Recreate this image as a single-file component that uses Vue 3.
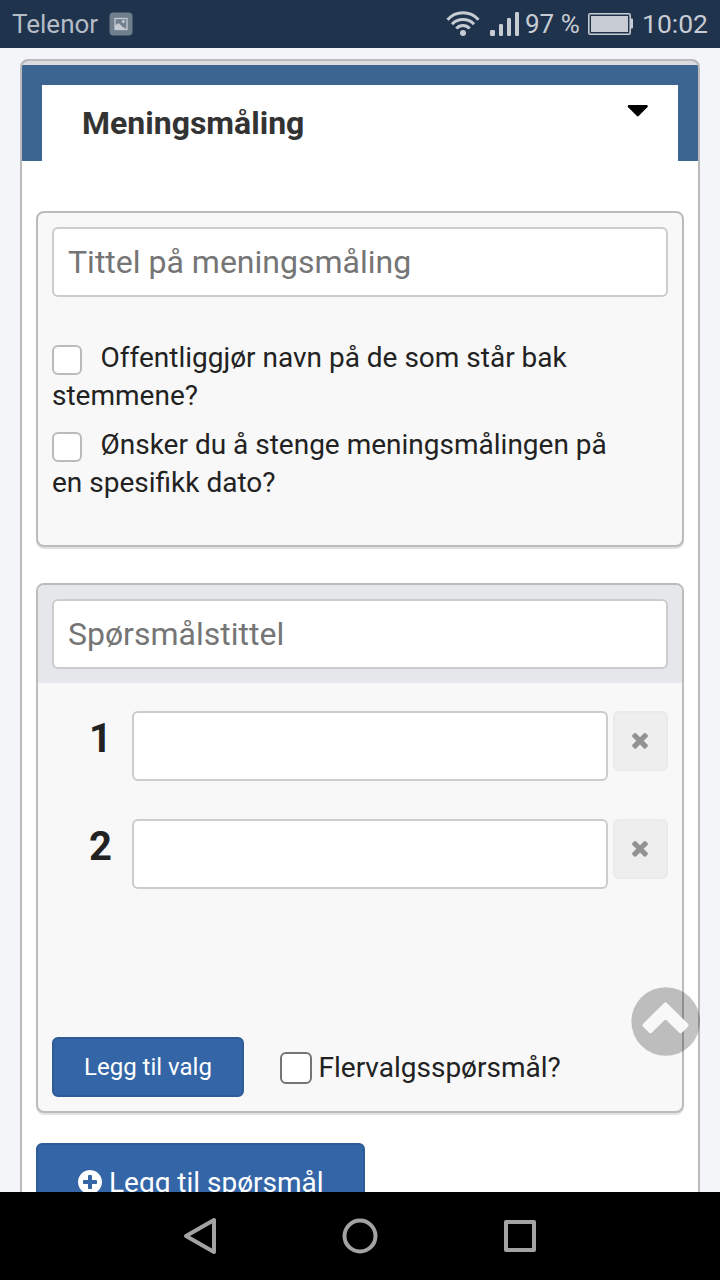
<template>
  <div class="screen">
    <header class="statusbar">
      <span class="carrier">Telenor</span>
      <svg class="shot" width="24" height="24" viewBox="0 0 24 24">
        <rect x="0.5" y="0.5" width="23" height="23" rx="4" fill="#6f7f8d" />
        <rect x="6" y="6.5" width="12" height="11" fill="none" stroke="#c5cbd2" stroke-width="1.3" />
        <path d="M6 17.500V13.500l2-1.500 2-.8 4 4 4 2.300z" fill="#c5cbd2" />
        <path d="M14.300 7.800v3.400M12.600 9.500h3.400" stroke="#c5cbd2" stroke-width="1.300" />
      </svg>
      <div class="spacer" />
      <svg class="wifi" width="34" height="26" viewBox="0 0 34 26" fill="none" stroke="#c7ccd4">
        <path d="M1.500 8.700C10-.5 24-.5 32.500 8.700" stroke-width="3" />
        <path d="M6 13.200C12 7 22 7 28 13.200" stroke-width="3" />
        <path d="M10.300 17.600C14 13.600 20 13.600 23.700 17.600" stroke-width="3" />
        <circle cx="17" cy="22" r="3" fill="#c7ccd4" stroke="none" />
      </svg>
      <svg class="signal" width="30" height="24" viewBox="0 0 30 24" fill="#c7ccd4">
        <rect x="0" y="18" width="5" height="6" rx="1.200" />
        <rect x="9" y="12" width="4" height="12" rx="1.200" />
        <rect x="17" y="6" width="4" height="18" rx="1.200" />
        <rect x="25" y="0" width="4" height="24" rx="1.200" />
      </svg>
      <span class="percent">97 %</span>
      <svg class="battery" width="46" height="22" viewBox="0 0 46 22">
        <rect x="0.800" y="0.800" width="41.400" height="20.400" rx="1.500" fill="none" stroke="#c7ccd4" stroke-width="1.600" />
        <rect x="3" y="3" width="37" height="16" fill="#c7ccd4" />
        <path d="M43 5.500h1a1 1 0 0 1 1 1v8a1 1 0 0 1-1 1h-1z" fill="#c7ccd4" />
      </svg>
      <span class="clock">10:02</span>
    </header>

    <main class="page">
      <section class="card">
        <div class="card-head">
          <button class="tab" type="button">
            <span>Meningsmåling</span>
            <svg class="caret" width="22" height="12" viewBox="0 0 22 12">
              <path d="M1.600 0h18.400q1.600.8.600 2L11.600 11q-.8.800-1.600 0L.800 2Q0 .8 1.600 0z" />
            </svg>
          </button>
        </div>

        <div class="card-body">
          <div class="panel settings">
            <input v-model="title" class="field" type="text" placeholder="Tittel på meningsmåling" />
            <label v-for="opt in options" :key="opt.text" class="option">
              <input v-model="opt.checked" class="check" type="checkbox" />{{ opt.text }}
            </label>
          </div>

          <div class="panel question">
            <div class="question-head">
              <input v-model="question" class="field" type="text" placeholder="Spørsmålstittel" />
            </div>
            <div class="choices">
              <div v-for="(choice, i) in choices" :key="i" class="choice">
                <span class="number">{{ i + 1 }}</span>
                <input v-model="choice.value" class="field" type="text" />
                <button class="remove" type="button" aria-label="Fjern">
                  <svg width="24" height="24" viewBox="0 0 1792 1792" fill="#929292">
                    <path d="M1490 1322q0 40-28 68l-136 136q-28 28-68 28t-68-28l-294-294-294 294q-28 28-68 28t-68-28l-136-136q-28-28-28-68t28-68l294-294-294-294q-28-28-28-68t28-68l136-136q28-28 68-28t68 28l294 294 294-294q28-28 68-28t68 28l136 136q28 28 28 68t-28 68l-294 294 294 294q28 28 28 68z" />
                  </svg>
                </button>
              </div>
            </div>
            <div class="question-foot">
              <button class="btn" type="button">Legg til valg</button>
              <label class="multi">
                <input v-model="multiple" class="check check--dark" type="checkbox" />
                <span>Flervalgsspørsmål?</span>
              </label>
            </div>
          </div>

          <button class="btn btn--large" type="button">
            <svg width="28" height="28" viewBox="0 0 1792 1792" fill="#fff">
              <path d="M1344 960v-128q0-26-19-45t-45-19h-256v-256q0-26-19-45t-45-19h-128q-26 0-45 19t-19 45v256h-256q-26 0-45 19t-19 45v128q0 26 19 45t45 19h256v256q0 26 19 45t45 19h128q26 0 45-19t19-45v-256h256q26 0 45-19t19-45zm320-64q0 209-103 385.500t-279.500 279.500-385.500 103-385.500-103-279.500-279.500-103-385.500 103-385.500 279.500-279.500 385.500-103 385.500 103 279.500 279.500 103 385.500z" />
            </svg>
            <span>Legg til spørsmål</span>
          </button>
        </div>
      </section>

      <button class="to-top" type="button" aria-label="Til toppen">
        <svg width="69" height="69" viewBox="0 0 69 69">
          <circle cx="34.700" cy="34.500" r="34.300" fill="#000" fill-opacity="0.235" />
          <path
            d="M34.500 17.400L55.500 38.200L49.400 44.200L34.500 29.300L19.600 44.200L13.500 38.200Z"
            fill="#f8f8f8"
            stroke="#f8f8f8"
            stroke-width="4"
            stroke-linejoin="round"
          />
        </svg>
      </button>
    </main>

    <nav class="navbar">
      <svg width="34" height="40" viewBox="0 0 34 40">
        <path d="M31 4v32L3 20z" />
      </svg>
      <svg width="36" height="36" viewBox="0 0 36 36">
        <circle cx="18" cy="18" r="15.500" />
      </svg>
      <svg width="32" height="32" viewBox="0 0 32 32">
        <rect x="2" y="2" width="28" height="28" />
      </svg>
    </nav>
  </div>
</template>

<script setup>
import { reactive, ref } from 'vue'

const title = ref('')
const question = ref('')
const multiple = ref(false)

const options = reactive([
  { text: 'Offentliggjør navn på de som står bak stemmene?', checked: false },
  { text: 'Ønsker du å stenge meningsmålingen på en spesifikk dato?', checked: false }
])

const choices = reactive([{ value: '' }, { value: '' }])
</script>

<style>
body {
  margin: 0;
}
</style>

<style scoped>
* {
  box-sizing: border-box;
}

.screen {
  display: flex;
  flex-direction: column;
  width: 720px;
  height: 1280px;
  overflow: hidden;
  background: #f4f5f8;
  color: #222;
  font-family: Roboto, 'Liberation Sans', sans-serif;
}

button,
input {
  margin: 0;
  font-family: inherit;
}

/* status bar */
.statusbar {
  display: flex;
  flex: none;
  align-items: center;
  height: 48px;
  padding: 0 12px;
  background: #20334d;
  color: #c7ccd4;
  font-size: 26.5px;
  line-height: 50px;
  white-space: nowrap;
}

.carrier {
  width: 97px;
  color: #b4bcc6;
  font-size: 26px;
  line-height: 48px;
}

.spacer {
  flex: 1;
}

.wifi {
  margin-right: 10px;
}

.signal {
  margin-right: 5px;
}

.percent {
  width: 63px;
  font-size: 26px;
}

.clock {
  width: 66px;
  margin-left: 8px;
}

/* page */
.page {
  position: relative;
  flex: 1;
  min-height: 0;
  padding: 11px 20px 0;
  overflow: hidden;
}

.card {
  height: 1300px;
  overflow: hidden;
  border: 2px solid #bbb;
  border-radius: 8px;
  background: #fff;
}

.card-head {
  height: 100px;
  padding: 20px 20px 0;
  border-top: 4px solid #ddd;
  background: #3d6592;
}

.tab {
  display: flex;
  justify-content: space-between;
  width: 100%;
  height: 76px;
  padding: 20px 29px 0 40px;
  border: 0;
  background: #fff;
  color: #333;
  font-size: 32px;
  font-weight: 700;
  line-height: 37px;
}

.caret {
  fill: #000;
}

.card-body {
  padding: 50px 14px 0;
}

.panel {
  border: 2px solid #bbb;
  border-radius: 8px;
  background: #f8f8f8;
  box-shadow: 0 2px 0 #e2e2e2;
}

.field {
  display: block;
  width: 100%;
  height: 70px;
  padding: 0 14px;
  border: 2px solid #ccc;
  border-radius: 6px;
  outline: 0;
  background: #fff;
  font-size: 32px;
}

.field::placeholder {
  color: #757575;
}

.settings {
  height: 336px;
  padding: 14px;
}

.option {
  display: block;
  margin-top: 11px;
  padding-right: 28px;
  font-size: 28px;
  line-height: 38px;
}

.field + .option {
  margin-top: 42px;
}

.check {
  width: 30px;
  height: 30px;
  margin-right: 18.5px;
  border: 2px solid #bbb;
  border-radius: 6px;
  appearance: none;
  background: #fff;
  vertical-align: -8px;
}

.check--dark {
  width: 32px;
  height: 32px;
  margin-top: 2px;
  margin-right: 6.5px;
  border-color: #757575;
}

.question {
  display: flex;
  flex-direction: column;
  height: 530px;
  margin-top: 36px;
  overflow: hidden;
}

.question-head {
  height: 98px;
  padding: 14px;
  background: #e6e7eb;
}

.choices {
  display: grid;
  gap: 38px;
  padding: 28px 14px 0;
}

.choice {
  display: flex;
}

.choice .field {
  width: 476px;
}

.number {
  width: 80px;
  padding-right: 20px;
  font-size: 40px;
  font-weight: 700;
  line-height: 56px;
  text-align: right;
}

.remove {
  display: flex;
  align-items: center;
  justify-content: center;
  width: 55px;
  height: 60px;
  margin-left: 5px;
  padding: 0 1px 2px 0;
  border: 2px solid #eaeaea;
  border-radius: 6px;
  background: #eee;
}

.question-foot {
  display: flex;
  align-items: center;
  margin-top: auto;
  padding: 0 14px 14px;
}

.btn {
  width: 192px;
  height: 60px;
  padding: 0;
  border: 2px solid #2f5c97;
  border-radius: 6px;
  background: #3465a6;
  color: #fff;
  font-size: 24px;
}

.multi {
  display: flex;
  align-items: center;
  margin-left: 36px;
  font-size: 28px;
}

.btn--large {
  display: flex;
  align-items: center;
  width: 329px;
  height: 78px;
  margin-top: 30px;
  padding: 0 38px;
  font-size: 28px;
}

.btn--large span {
  margin-left: 5px;
}

.to-top {
  position: absolute;
  top: 939px;
  right: 20px;
  width: 69px;
  height: 69px;
  padding: 0;
  border: 0;
  background: none;
}

.to-top svg {
  display: block;
}

/* android navigation */
.navbar {
  display: grid;
  flex: none;
  grid-template-columns: repeat(3, 160px);
  align-items: center;
  justify-content: center;
  justify-items: center;
  height: 88px;
  background: #000;
}

.navbar svg {
  fill: none;
  stroke: #a3a3a3;
  stroke-width: 4;
  stroke-linejoin: round;
}
</style>
